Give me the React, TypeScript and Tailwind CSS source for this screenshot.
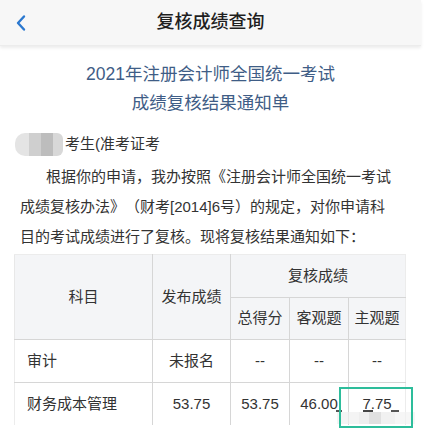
import React from "react";

const font = { fontFamily: '"Liberation Sans", "Noto Sans CJK SC", sans-serif' };

export default function App() {
  const th = "border border-[#d6d6d6] bg-[#f4f5f7] text-center font-normal p-0";
  const td = "border border-[#d6d6d6] bg-white text-center p-0";
  return (
    <div className="w-[435px] h-[438px] overflow-hidden bg-white text-[#333] [text-spacing-trim:space-all]" style={font}>
      <div className="relative w-[421px] h-[46px] bg-[#f7f7f7] flex items-center justify-center shadow-[0_2px_3px_rgba(0,0,0,0.08)] border-b border-[#ececec]">
        <svg className="absolute left-[15px] top-[14px]" width="12" height="18" viewBox="0 0 12 18" fill="none">
          <path d="M9 2.5 L3 9 L9 15.5" stroke="#2b78cf" strokeWidth="2.4" strokeLinecap="round" strokeLinejoin="round" />
        </svg>
        <span className="text-[18px] font-medium text-[#1f1f1f] leading-none -mt-[2px]">复核成绩查询</span>
      </div>

      <div className="w-[421px] pt-[14px] flex flex-col items-center text-[17.5px] leading-[29px] text-[#3f5d86]">
        <div>2021年注册会计师全国统一考试</div>
        <div>成绩复核结果通知单</div>
      </div>

      <div className="mt-[11px] flex items-center h-[30px] pl-[15px] text-[15px]">
        <div className="flex h-[23px] w-[48px] rounded-l-[10px] overflow-hidden">
          <div className="w-[14px] bg-[#e4e4e4]" />
          <div className="w-[12px] bg-[#cfcfcf]" />
          <div className="w-[12px] bg-[#bdbdbd]" />
          <div className="w-[10px] bg-[#d8d8d8] rounded-r-[6px]" />
        </div>
        <span className="ml-[2px] leading-[30px]">考生(准考证考</span>
      </div>

      <div className="pl-[20px] text-[15px] leading-[30px] text-[#333] mt-[3px] whitespace-nowrap">
        <div className="pl-[26px]">根据你的申请，我办按照《注册会计师全国统一考试</div>
        <div>成绩复核办法》（财考[2014]6号）的规定，对你申请科</div>
        <div>目的考试成绩进行了复核。现将复核结果通知如下：</div>
      </div>

      <div className="relative mt-[2px] ml-[14px]">
        <table className="table-fixed border-collapse text-[15px] w-[391px]">
          <colgroup>
            <col className="w-[138px]" />
            <col className="w-[78px]" />
            <col className="w-[59px]" />
            <col className="w-[59px]" />
            <col className="w-[57px]" />
          </colgroup>
          <tbody>
            <tr className="h-[43px]">
              <th rowSpan={2} className={th + " border-l-[#e8e8e8] border-t-[#ececec]"}>科目</th>
              <th rowSpan={2} className={th + " border-t-[#ececec]"}>发布成绩</th>
              <th colSpan={3} className={th + " border-t-[#ececec] border-r-[#ececec]"}>复核成绩</th>
            </tr>
            <tr className="h-[42px]">
              <th className={th}>总得分</th>
              <th className={th}>客观题</th>
              <th className={th + " border-r-[#ececec]"}>主观题</th>
            </tr>
            <tr className="h-[43px]">
              <td className={td + " text-left pl-[12px] border-l-[#ececec]"}>审计</td>
              <td className={td}>未报名</td>
              <td className={td}>--</td>
              <td className={td}>--</td>
              <td className={td + " border-r-[#ececec]"}>--</td>
            </tr>
            <tr className="h-[43px]">
              <td className={td + " text-left pl-[12px] border-l-[#ececec] border-b-white"}>财务成本管理</td>
              <td className={td + " border-b-white"}>53.75</td>
              <td className={td + " border-b-white"}>53.75</td>
              <td className={td + " border-b-white"}>
                <span className="relative">
                  46.00
                  <span className="absolute left-[36px] top-[15px] w-[6px] h-[2px] bg-[#555]" />
                </span>
              </td>
              <td className={td + " border-b-white border-r-[#ececec]"}>
                <span className="relative">
                  7.75
                  <span className="absolute left-[1px] top-[15px] w-[10px] h-[2px] bg-[#444]" />
                  <span className="absolute left-[29px] top-[15px] w-[8px] h-[2px] bg-[#555]" />
                </span>
              </td>
            </tr>
          </tbody>
        </table>
        <div className="absolute left-[323px] top-[158px] w-[92px] h-[12px] flex opacity-70">
          <div className="w-[22px] bg-[#f0f0f0]" />
          <div className="w-[10px] bg-[#e8e8e8]" />
          <div className="w-[12px] bg-[#d4d4d4]" />
          <div className="w-[14px] bg-[#ececec]" />
          <div className="w-[20px] bg-[#f3f3f3]" />
        </div>
        <div className="absolute left-[325px] top-[133px] w-[74px] h-[41px] border-2 border-[#2dbd9b]" />
      </div>
    </div>
  );
}
